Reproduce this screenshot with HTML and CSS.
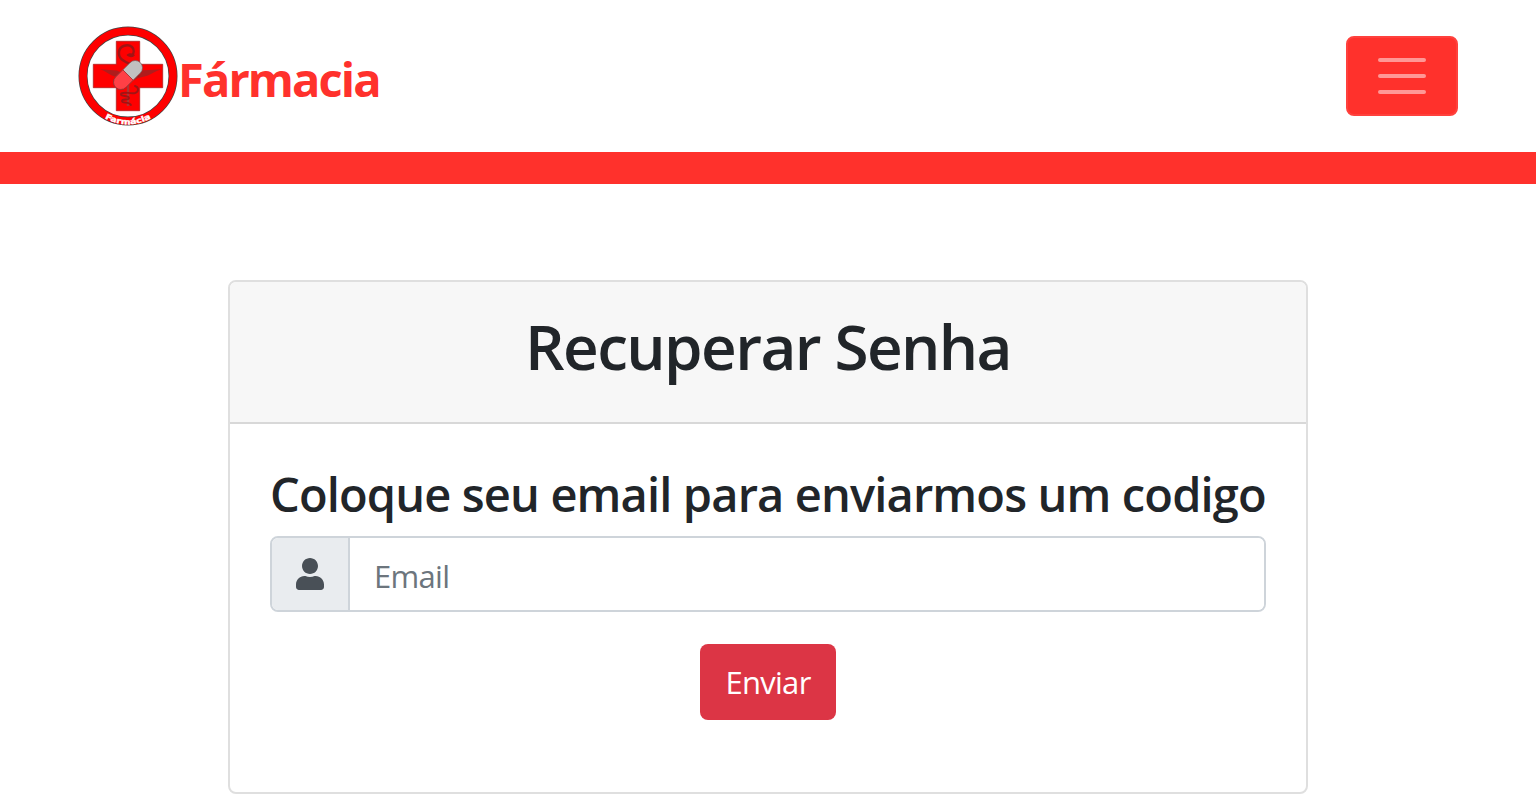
FILE: index.html
```html
<!DOCTYPE html>
<html lang="pt-BR">
<head>
<meta charset="utf-8">
<title>Recuperar Senha</title>
<link rel="stylesheet" href="styles.css">
</head>
<body>
<nav class="navbar">
  <a class="brand">
    <svg class="logo" viewBox="0 0 100 100" width="100" height="100">
      <circle cx="50" cy="50" r="45" fill="#fff" stroke="#444" stroke-width="9"/>
      <circle cx="50" cy="50" r="45" fill="none" stroke="#fe0000" stroke-width="7.600"/>
      <path d="M38.300 15.300h23.400v23h23v23.400h-23v23h-23.400v-23h-23v-23.400h23z" fill="#fe0000" stroke="#b02020" stroke-width=".8"/>
      <path d="M22 43.300l17 1.200 8 4v6c-5-4-10-3-14-5.500-4-2-6-4-11-5.700zM84 43.300l-22 1.200-6 4v6c5-4 10-3 15-5.500 4-2 7-4 13-5.700z" fill="#b01c1c"/>
      <path d="M50 42v38" stroke="#b03434" stroke-width="2.400"/>
      <path d="M54 29.500c2-2.500 2.500-6 0-8.500-4-3.500-12-1.500-13 4.500-1 8 6 10 12 13 5 3 7 7 7 11" fill="none" stroke="#a01414" stroke-width="2.500" stroke-linecap="round"/>
      <path d="M48.500 29c2-2.500 6-2.500 8.500.3-2 2.500-6 2.500-8.500-.3z" fill="#a01414"/>
      <path d="M57 60c4 1 4 6 0 7-5 1-13-2-14 1s8 1 8 4-7 0-7 3 7 0 9 4" fill="none" stroke="#a01414" stroke-width="1.900" stroke-linecap="round"/>
      <g transform="rotate(-45 50 49)">
        <rect x="32.500" y="41.700" width="35" height="14.600" rx="7.300" fill="#c1c1c1" stroke="#7b5858" stroke-width=".7"/>
        <path d="M50 41.700v14.600h-10.200a7.300 7.300 0 0 1 0-14.600z" fill="#ff4046" stroke="#9b2020" stroke-width=".7"/>
      </g>
      <path d="M23 86.500a46 46 0 0 0 54 0l1.800 2a48.700 48.700 0 0 1-57.600 0z" fill="#fe0000"/>
      <path id="logo-arc" d="M25.500 91.500a48 48 0 0 0 49 0" fill="none"/>
      <text class="logo-text"><textPath href="#logo-arc" startOffset="1.500" textLength="48" lengthAdjust="spacingAndGlyphs">Farmácia</textPath></text>
    </svg>
    <span class="brand-name">Fármacia</span>
  </a>
  <button class="toggler" aria-label="Menu">
    <svg viewBox="0 0 30 30" width="60" height="60"><path d="M4 7h22M4 15h22M4 23h22" stroke="#fff" stroke-opacity=".5" stroke-width="2" stroke-linecap="round"/></svg>
  </button>
</nav>
<div class="strip"></div>
<main class="card">
  <header class="card-header"><h1 class="title">Recuperar Senha</h1></header>
  <form class="card-body">
    <h3 class="subtitle">Coloque seu email para enviarmos um codigo</h3>
    <div class="input-group">
      <span class="addon"><svg viewBox="0 0 448 512" width="28" height="32"><path fill="#495057" d="M224 256c70.700 0 128-57.300 128-128S294.700 0 224 0 96 57.300 96 128s57.300 128 128 128zm89.600 32h-16.700c-22.200 10.200-46.900 16-72.900 16s-50.600-5.800-72.900-16h-16.700C60.200 288 0 348.200 0 422.400V464c0 26.500 21.500 48 48 48h352c26.500 0 48-21.500 48-48v-41.600c0-74.200-60.200-134.400-134.400-134.400z"/></svg></span>
      <input class="field" type="text" placeholder="Email">
    </div>
    <button class="submit" type="button">Enviar</button>
  </form>
</main>
</body>
</html>
```
FILE: styles.css
```css
* { box-sizing: border-box; }
body {
  margin: 0;
  background: #fff;
  color: #212529;
  font-family: "Segoe UI", "Open Sans", "Noto Sans", sans-serif;
  font-size: 31px;
  line-height: 1.5;
  overflow: hidden;
}
.navbar {
  display: flex;
  align-items: center;
  justify-content: space-between;
  height: 152px;
  padding: 0 78px;
}
.brand { display: flex; align-items: center; color: #ff312c; }
.logo { display: block; flex: none; }
.logo-text { font: bold 7.5px "DejaVu Sans", sans-serif; fill: #fff; stroke: #fff; stroke-width: .4px; }
.brand-name {
  font-size: 47px;
  font-weight: 700;
  line-height: 72px;
  padding-top: 5px;
  letter-spacing: -1.9px;
}
.toggler {
  display: flex;
  align-items: center;
  justify-content: center;
  width: 112px;
  height: 80px;
  padding: 0;
  background: #ff312c;
  border: 2px solid #ff413d;
  border-radius: 8px;
}
.toggler svg { fill: none; }
.strip { height: 32px; background: #ff312c; }
.card {
  width: 1080px;
  height: 514px;
  margin: 96px auto 0;
  border: 2px solid #dfdfdf;
  border-radius: 8px;
  overflow: hidden;
}
.card-header {
  height: 142px;
  padding-top: 26px;
  background: #f7f7f7;
  border-bottom: 2px solid #d8d8d8;
  text-align: center;
}
.title {
  margin: 0;
  font-size: 62px;
  font-weight: 600;
  line-height: 77px;
  letter-spacing: -1.6px;
  white-space: nowrap;
}
.card-body {
  display: flex;
  flex-direction: column;
  align-items: center;
  padding: 41px 40px 40px;
}
.subtitle {
  align-self: flex-start;
  margin: 0 0 13px;
  font-size: 47px;
  font-weight: 600;
  line-height: 58px;
  letter-spacing: -0.86px;
  white-space: nowrap;
}
.input-group {
  display: flex;
  width: 996px;
  height: 76px;
  border: 2px solid #ced4da;
  border-radius: 8px;
  overflow: hidden;
}
.addon {
  display: flex;
  align-items: center;
  justify-content: center;
  width: 78px;
  background: #e9ecef;
  border-right: 2px solid #ced4da;
}
.field {
  flex: 1;
  min-width: 0;
  padding: 5px 24px 0;
  border: 0;
  outline: 0;
  font: inherit;
  letter-spacing: -0.7px;
}
.field::placeholder { color: #6c757d; opacity: 1; }
.submit {
  width: 136px;
  height: 76px;
  margin-top: 32px;
  padding: 1px 0 0;
  border: 0;
  border-radius: 8px;
  background: #dc3545;
  color: #fff;
  font: inherit;
  letter-spacing: -0.7px;
}
```
